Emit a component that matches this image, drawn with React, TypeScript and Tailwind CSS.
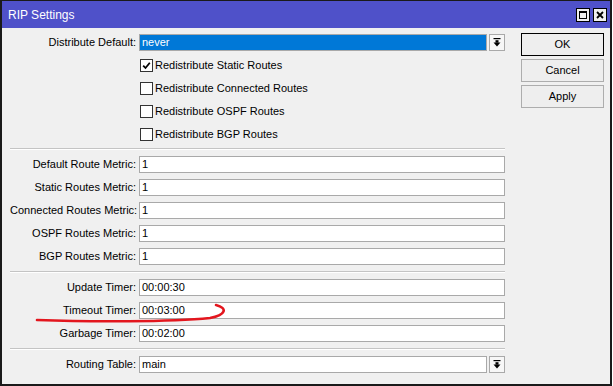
import React from "react";

function DropBtn() {
  return (
    <div className="w-[16px] h-[17px] ml-[2px] border border-[#a9a9a9] bg-[#f7f7f7] flex items-center justify-center shrink-0">
      <svg width="8" height="9" viewBox="0 0 8 9">
        <rect x="0.5" y="0" width="7" height="1.2" fill="#000" />
        <rect x="2.5" y="2.2" width="3" height="2.5" fill="#000" />
        <path d="M0.5 4.5 H7.5 L4 8.5 Z" fill="#000" />
      </svg>
    </div>
  );
}

function Label({ children }: { children: React.ReactNode }) {
  return (
    <div className="w-[126px] shrink-0 text-right whitespace-nowrap leading-none">{children}</div>
  );
}

function Input({ value, selected }: { value: string; selected?: boolean }) {
  return (
    <div
      className={
        "flex-1 h-full border border-[#a9a9a9] pl-[2px] flex items-center leading-none " +
        (selected ? "bg-[#0078d7] text-white" : "bg-white")
      }
    >
      {value}
    </div>
  );
}

function FieldRow({ label, value, drop, selected }: { label: string; value: string; drop?: boolean; selected?: boolean }) {
  return (
    <div className="flex items-center h-[17px]">
      <Label>{label}</Label>
      <div className="ml-[3px] flex-1 flex h-full">
        <Input value={value} selected={selected} />
        {drop && <DropBtn />}
      </div>
    </div>
  );
}

function CheckRow({ label, checked }: { label: string; checked?: boolean }) {
  return (
    <div className="flex items-center h-[17px] pl-[130px]">
      <div className="w-[13px] h-[13px] border border-[#333] bg-white flex items-center justify-center shrink-0">
        {checked && (
          <svg width="9" height="9" viewBox="0 0 9 9">
            <path d="M1.2 4.6 L3.5 7 L7.8 1.8" stroke="#000" strokeWidth="1.8" fill="none" />
          </svg>
        )}
      </div>
      <span className="ml-[2px] leading-none whitespace-nowrap">{label}</span>
    </div>
  );
}

function Sep({ top }: { top: number }) {
  return (
    <div className={top === 5 ? "pt-[5px] pb-[6px]" : "pt-[6px] pb-[6px]"}>
      <div className="h-px bg-[#c4c4c4]" />
      <div className="h-px bg-white" />
    </div>
  );
}

function Btn({ label, def }: { label: string; def?: boolean }) {
  return (
    <div
      className={
        "w-[83px] h-[23px] flex items-center justify-center leading-none bg-[#eeeeee] border " +
        (def ? "border-black" : "border-[#adadad]")
      }
    >
      {label}
    </div>
  );
}

export default function App() {
  return (
    <div className="w-[613px] h-[386px] bg-white font-['Liberation_Sans',Arial,sans-serif] text-[11px] text-black">
      <div className="relative w-[612px] h-[386px] border-l-2 border-t border-r-2 border-b-2 border-[#1a1a1a] bg-[#f0f0f0] flex flex-col">
        <div className="h-[27px] bg-[#4f51c9] flex items-center pl-[6px] pr-[3px] shrink-0">
          <span className="text-white text-[12px] leading-none">RIP Settings</span>
          <div className="ml-auto flex gap-[3px]">
            <div className="w-[14px] h-[14px] border border-black bg-[#f0f0f0] flex items-center justify-center">
              <div className="w-[8px] h-[8px] border border-black border-t-2" />
            </div>
            <div className="w-[14px] h-[14px] border border-black bg-[#f0f0f0] flex items-center justify-center">
              <svg width="8" height="8" viewBox="0 0 8 8">
                <path d="M1 1 L7 7 M7 1 L1 7" stroke="#000" strokeWidth="1.8" />
              </svg>
            </div>
          </div>
        </div>
        <div className="flex pt-[5px] pl-[8px]">
          <div className="w-[495px] mt-[1px] flex flex-col">
            <div className="flex flex-col gap-[6px]">
              <FieldRow label="Distribute Default:" value="never" drop selected />
              <CheckRow label="Redistribute Static Routes" checked />
              <CheckRow label="Redistribute Connected Routes" />
              <CheckRow label="Redistribute OSPF Routes" />
              <CheckRow label="Redistribute BGP Routes" />
            </div>
            <Sep top={5} />
            <div className="flex flex-col gap-[6px]">
              <FieldRow label="Default Route Metric:" value="1" />
              <FieldRow label="Static Routes Metric:" value="1" />
              <FieldRow label="Connected Routes Metric:" value="1" />
              <FieldRow label="OSPF Routes Metric:" value="1" />
              <FieldRow label="BGP Routes Metric:" value="1" />
            </div>
            <Sep top={6} />
            <div className="flex flex-col gap-[6px]">
              <FieldRow label="Update Timer:" value="00:00:30" />
              <FieldRow label="Timeout Timer:" value="00:03:00" />
              <FieldRow label="Garbage Timer:" value="00:02:00" />
            </div>
            <Sep top={6} />
            <FieldRow label="Routing Table:" value="main" drop />
          </div>
          <div className="ml-[16px] flex flex-col gap-[3px]">
            <Btn label="OK" def />
            <Btn label="Cancel" />
            <Btn label="Apply" />
          </div>
        </div>
        <svg className="absolute left-[-2px] top-[-1px] pointer-events-none" width="613" height="386" viewBox="0 0 613 386">
          <path
            d="M37 320 C 90 322, 170 322, 210 318 C 226 315, 228 308, 216 305"
            stroke="#e3161e"
            strokeWidth="2.6"
            fill="none"
            strokeLinecap="round"
          />
        </svg>
      </div>
    </div>
  );
}
